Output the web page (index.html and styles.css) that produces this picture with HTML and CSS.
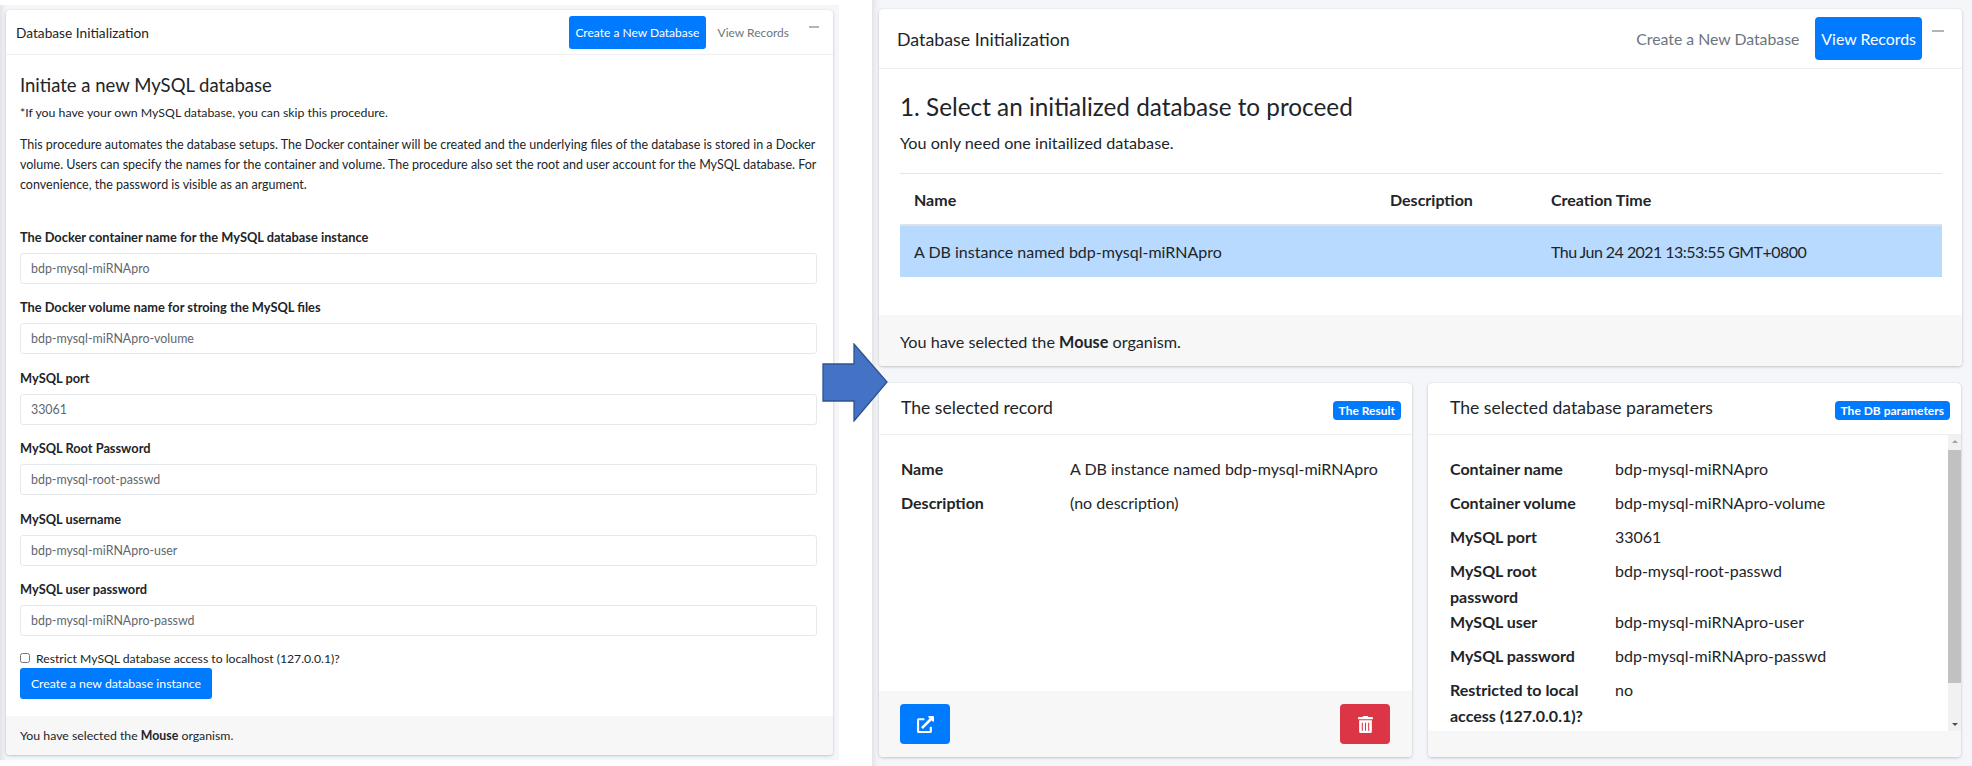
FILE: index.html
```html
<!DOCTYPE html>
<html lang="en">
<head>
    <meta charset="UTF-8">
    <title>Database Initialization</title>
    <link rel="stylesheet" href="styles.css">
</head>
<body>
    <!-- Left capture: create form -->
    <section class="shot shot-left">
        <div class="card card-form">
            <div class="form-header">
                <span class="form-title">Database Initialization</span>
                <nav class="form-tabs">
                    <a class="form-tab active">Create a New Database</a>
                    <a class="form-tab">View Records</a>
                    <span class="collapse-icon"></span>
                </nav>
            </div>
            <div class="form-body">
                <h4>Initiate a new MySQL database</h4>
                <p class="form-note">*If you have your own MySQL database, you can skip this procedure.</p>
                <p class="form-intro">This procedure automates the database setups. The Docker container will be created and the underlying files of the database is stored in a Docker volume. Users can specify the names for the container and volume. The procedure also set the root and user account for the MySQL database. For convenience, the password is visible as an argument.</p>

                <label class="field-label">The Docker container name for the MySQL database instance</label>
                <input class="field" type="text" value="bdp-mysql-miRNApro">
                <label class="field-label">The Docker volume name for stroing the MySQL files</label>
                <input class="field" type="text" value="bdp-mysql-miRNApro-volume">
                <label class="field-label">MySQL port</label>
                <input class="field" type="text" value="33061">
                <label class="field-label">MySQL Root Password</label>
                <input class="field" type="text" value="bdp-mysql-root-passwd">
                <label class="field-label">MySQL username</label>
                <input class="field" type="text" value="bdp-mysql-miRNApro-user">
                <label class="field-label">MySQL user password</label>
                <input class="field" type="text" value="bdp-mysql-miRNApro-passwd">

                <label class="check-row"><input type="checkbox"> Restrict MySQL database access to localhost (127.0.0.1)?</label>
                <button class="submit-btn">Create a new database instance</button>
            </div>
            <div class="form-footer">You have selected the <strong>Mouse</strong> organism.</div>
        </div>
    </section>

    <!-- Right capture: records -->
    <section class="shot shot-right">
        <div class="card card-records">
            <div class="records-header">
                <span class="records-title">Database Initialization</span>
                <nav class="records-tabs">
                    <a class="records-tab">Create a New Database</a>
                    <a class="records-tab active">View Records</a>
                    <span class="collapse-icon big"></span>
                </nav>
            </div>
            <div class="records-body">
                <h4>1. Select an initialized database to proceed</h4>
                <p class="records-note">You only need one initailized database.</p>
                <hr>
                <table>
                    <thead>
                        <tr>
                            <th class="col-name">Name</th>
                            <th class="col-desc">Description</th>
                            <th>Creation Time</th>
                        </tr>
                    </thead>
                    <tbody>
                        <tr class="selected">
                            <td>A DB instance named bdp-mysql-miRNApro</td>
                            <td></td>
                            <td class="date-cell">Thu Jun 24 2021 13:53:55 GMT+0800</td>
                        </tr>
                    </tbody>
                </table>
            </div>
            <div class="records-footer">You have selected the <strong>Mouse</strong> organism.</div>
        </div>

        <div class="detail-row">
            <div class="card">
                <div class="detail-header">
                    <span class="detail-title">The selected record</span>
                    <span class="badge">The Result</span>
                </div>
                <div class="detail-body">
                    <dl class="props">
                        <dt>Name</dt><dd>A DB instance named bdp-mysql-miRNApro</dd>
                        <dt>Description</dt><dd>(no description)</dd>
                    </dl>
                </div>
                <div class="detail-footer">
                    <button class="icon-btn blue">
                        <svg viewBox="0 0 512 512" width="17" height="17"><path fill="#fff" d="M432,320H400a16,16,0,0,0-16,16V448H64V128H208a16,16,0,0,0,16-16V80a16,16,0,0,0-16-16H48A48,48,0,0,0,0,112V464a48,48,0,0,0,48,48H400a48,48,0,0,0,48-48V336A16,16,0,0,0,432,320ZM488,0h-128c-21.37,0-32.05,25.91-17,41l35.73,35.73L135,320.37a24,24,0,0,0,0,34L157.67,377a24,24,0,0,0,34,0L435.28,133.32,471,169c15,15,41,4.5,41-17V24A24,24,0,0,0,488,0Z"/></svg>
                    </button>
                    <button class="icon-btn red">
                        <svg viewBox="0 0 448 512" width="15" height="17"><path fill="#fff" d="M32 464a48 48 0 0 0 48 48h288a48 48 0 0 0 48-48V128H32zm272-256a16 16 0 0 1 32 0v224a16 16 0 0 1-32 0zm-96 0a16 16 0 0 1 32 0v224a16 16 0 0 1-32 0zm-96 0a16 16 0 0 1 32 0v224a16 16 0 0 1-32 0zM432 32H312l-9.4-18.7A24 24 0 0 0 281.1 0H166.8a23.72 23.72 0 0 0-21.4 13.3L136 32H16A16 16 0 0 0 0 48v32a16 16 0 0 0 16 16h416a16 16 0 0 0 16-16V48a16 16 0 0 0-16-16z"/></svg>
                    </button>
                </div>
            </div>

            <div class="card">
                <div class="detail-header">
                    <span class="detail-title">The selected database parameters</span>
                    <span class="badge">The DB parameters</span>
                </div>
                <div class="detail-body scrolling">
                    <dl class="props narrow">
                        <dt>Container name</dt><dd>bdp-mysql-miRNApro</dd>
                        <dt>Container volume</dt><dd>bdp-mysql-miRNApro-volume</dd>
                        <dt>MySQL port</dt><dd>33061</dd>
                        <dt>MySQL root password</dt><dd>bdp-mysql-root-passwd</dd>
                        <dt>MySQL user</dt><dd>bdp-mysql-miRNApro-user</dd>
                        <dt>MySQL password</dt><dd>bdp-mysql-miRNApro-passwd</dd>
                        <dt>Restricted to local access (127.0.0.1)?</dt><dd>no</dd>
                    </dl>
                    <div class="scrollbar">
                        <span class="arrow-up"></span>
                        <span class="thumb"></span>
                        <span class="arrow-down"></span>
                    </div>
                </div>
                <div class="detail-footer short"></div>
            </div>
        </div>
    </section>

    <!-- Arrow laid over both captures -->
    <svg class="flow-arrow" viewBox="0 0 66 79" width="66" height="79">
        <polygon points="1,21 32,21 32,1 65,39 32,78 32,58 1,58" fill="#4472c4" stroke="#2f528f" stroke-width="1.3"/>
    </svg>
</body>
</html>
```

FILE: styles.css
```css
* {
    box-sizing: border-box;
}
body {
    margin: 0;
    width: 1972px;
    height: 766px;
    display: flex;
    justify-content: space-between;
    align-items: flex-start;
    background: #fff;
    color: #212529;
    font-family: Lato, "Noto Sans", sans-serif;
    overflow: hidden;
    position: relative;
}
h4 {
    margin: 0;
    font-weight: 400;
}
p {
    margin: 0;
}
.shot {
    background-color: #f4f6f9;
    box-shadow: inset 7px 0 6px -5px rgba(0,0,0,0.1);
}
.shot-left {
    width: 839px;
    height: 755px;
    margin-top: 5px;
    padding: 5px 6px 5px 6px;
}
.shot-right {
    width: 1100px;
    height: 766px;
    padding: 9px 10px 9px 7px;
    display: flex;
    flex-direction: column;
    gap: 17px;
}
.card {
    background: #fff;
    border-radius: 4px;
    box-shadow: 0 0 1px rgba(0,0,0,0.125), 0 1px 3px rgba(0,0,0,0.2);
    display: flex;
    flex-direction: column;
    overflow: hidden;
}
.card-form {
    height: 745px;
}
.card-records {
    height: 357px;
    flex: none;
}

/* left form */
.form-header {
    height: 45px;
    flex: none;
    border-bottom: 1px solid #f0f0f0;
    padding: 0 14px 0 10px;
    display: flex;
    justify-content: space-between;
    align-items: center;
}
.form-title {
    font-size: 13.7px;
}
.form-tabs, .records-tabs {
    display: flex;
    align-items: center;
}
.form-tab {
    height: 33px;
    line-height: 33px;
    padding: 0 6px;
    font-size: 12px;
    color: #6c757d;
    border-radius: 3px;
    margin-right: 6px;
}
.form-tab.active {
    background: #007bff;
    color: #fff;
    padding: 0 6.25px;
}
.collapse-icon {
    display: block;
    width: 10px;
    height: 2px;
    background: #adb5bd;
    margin: -10px 0 0 8px;
}
.collapse-icon.big {
    width: 12px;
    margin: -16px 0 0 10px;
}
.form-body {
    flex: 1;
    padding: 19px 16px 0 14px;
}
.form-body h4 {
    font-size: 18.5px;
    line-height: 23px;
}
.form-note {
    font-size: 12.3px;
    line-height: 20px;
    margin-top: 6px;
}
.form-intro {
    font-size: 12.5px;
    line-height: 20px;
    margin-top: 12px;
}
.field-label {
    display: block;
    font-size: 12.8px;
    line-height: 20px;
    font-weight: 700;
    margin-top: 13.4px;
}
.form-intro + .field-label {
    margin-top: 32px;
}
.field {
    display: block;
    width: 100%;
    height: 31px;
    margin-top: 6px;
    padding: 0 10px;
    font-family: inherit;
    font-size: 12.4px;
    color: #5f676e;
    border: 1px solid #e6e9ec;
    border-radius: 3px;
    background: #fff;
}
.check-row {
    display: flex;
    align-items: center;
    gap: 6px;
    height: 20px;
    margin-top: 12.4px;
    font-size: 12.2px;
}
.check-row input {
    margin: 0;
    width: 10px;
    height: 10px;
}
.submit-btn {
    display: block;
    height: 31px;
    width: 192px;
    padding: 0;
    font-family: inherit;
    font-size: 12.3px;
    white-space: nowrap;
    color: #fff;
    background: #007bff;
    border: none;
    border-radius: 3px;
}
.form-footer {
    height: 39px;
    flex: none;
    padding: 0 14px;
    line-height: 40px;
    font-size: 12.3px;
    background: #f7f7f7;
}

/* right records */
.records-header {
    height: 60px;
    flex: none;
    border-bottom: 1px solid #eee;
    padding: 0 18px;
    display: flex;
    justify-content: space-between;
    align-items: center;
}
.records-title {
    font-size: 17.8px;
}
.records-tab {
    height: 43px;
    line-height: 43px;
    padding: 0 6px;
    font-size: 15.8px;
    color: #6c757d;
    border-radius: 4px;
    margin-right: 10px;
}
.records-tab.active {
    background: #007bff;
    color: #fff;
    margin-right: 0;
    font-size: 15.9px;
}
.records-body {
    flex: 1;
    padding: 23px 20px 0 21px;
}
.records-body h4 {
    font-size: 24.3px;
    line-height: 30px;
}
.records-note {
    font-size: 16.2px;
    line-height: 26px;
    margin-top: 8px;
}
hr {
    border: none;
    border-top: 1px solid #e5e5e5;
    margin: 17px 0 0;
}
table {
    width: 100%;
    border-collapse: collapse;
    table-layout: fixed;
    font-size: 16px;
}
th {
    text-align: left;
    font-weight: 700;
    height: 51px;
    padding: 0 14px;
    border-bottom: 2px solid #dee2e6;
}
.col-name {
    width: 476px;
}
.col-desc {
    width: 161px;
}
td {
    height: 52px;
    padding: 0 14px;
}
.selected td {
    background: #b8daff;
}
.date-cell {
    letter-spacing: -0.55px;
}
.records-footer {
    height: 51px;
    flex: none;
    padding: 0 21px;
    line-height: 54px;
    font-size: 16.2px;
    background: #f7f7f7;
}

/* bottom cards */
.detail-row {
    flex: 1;
    display: grid;
    grid-template-columns: 533px 533px;
    gap: 16px;
}
.detail-header {
    height: 52px;
    flex: none;
    border-bottom: 1px solid #eee;
    padding: 0 11px 0 22px;
    display: flex;
    justify-content: space-between;
    align-items: center;
}
.detail-title {
    font-size: 17.6px;
    margin-top: -3px;
}
.badge {
    height: 19px;
    line-height: 19px;
    padding: 0 6px;
    margin-top: 3px;
    font-size: 12px;
    font-weight: 700;
    color: #fff;
    background: #007bff;
    border-radius: 4px;
}
.detail-body {
    flex: 1;
    padding: 21px 22px 0;
    font-size: 16px;
    overflow: hidden;
    min-height: 0;
}
.detail-body.scrolling {
    display: flex;
    padding: 0;
}
.props {
    margin: 0;
    display: grid;
    grid-template-columns: 169px 1fr;
    line-height: 25.6px;
}
.props.narrow {
    flex: 1;
    padding: 21px 0 0 22px;
    grid-template-columns: 165px 1fr;
    align-content: start;
}
dt {
    font-weight: 700;
    padding-right: 12px;
}
dd {
    margin: 0 0 8.4px;
}
.scrollbar {
    width: 13px;
    flex: none;
    background: #f1f1f1;
    display: flex;
    flex-direction: column;
    align-items: center;
}
.thumb {
    width: 100%;
    flex: 1;
    background: #c1c1c1;
    margin: 0 0 40px;
}
.arrow-up {
    width: 0;
    height: 0;
    margin: 5px 0 7px;
    border-left: 3.5px solid transparent;
    border-right: 3.5px solid transparent;
    border-bottom: 3.5px solid #a3a3a3;
}
.arrow-down {
    width: 0;
    height: 0;
    margin: 0 0 5px;
    border-left: 3.5px solid transparent;
    border-right: 3.5px solid transparent;
    border-top: 3.5px solid #505050;
}
.detail-footer {
    height: 66px;
    flex: none;
    padding: 0 22px 0 21px;
    background: #f7f7f7;
    display: flex;
    justify-content: space-between;
    align-items: center;
}
.detail-footer.short {
    height: 26px;
}
.icon-btn {
    width: 50px;
    height: 40px;
    border: none;
    border-radius: 4px;
    display: flex;
    align-items: center;
    justify-content: center;
}
.icon-btn.blue {
    background: #007bff;
}
.icon-btn.red {
    background: #dc3545;
}
.flow-arrow {
    position: absolute;
    left: 822px;
    top: 343px;
}
```
